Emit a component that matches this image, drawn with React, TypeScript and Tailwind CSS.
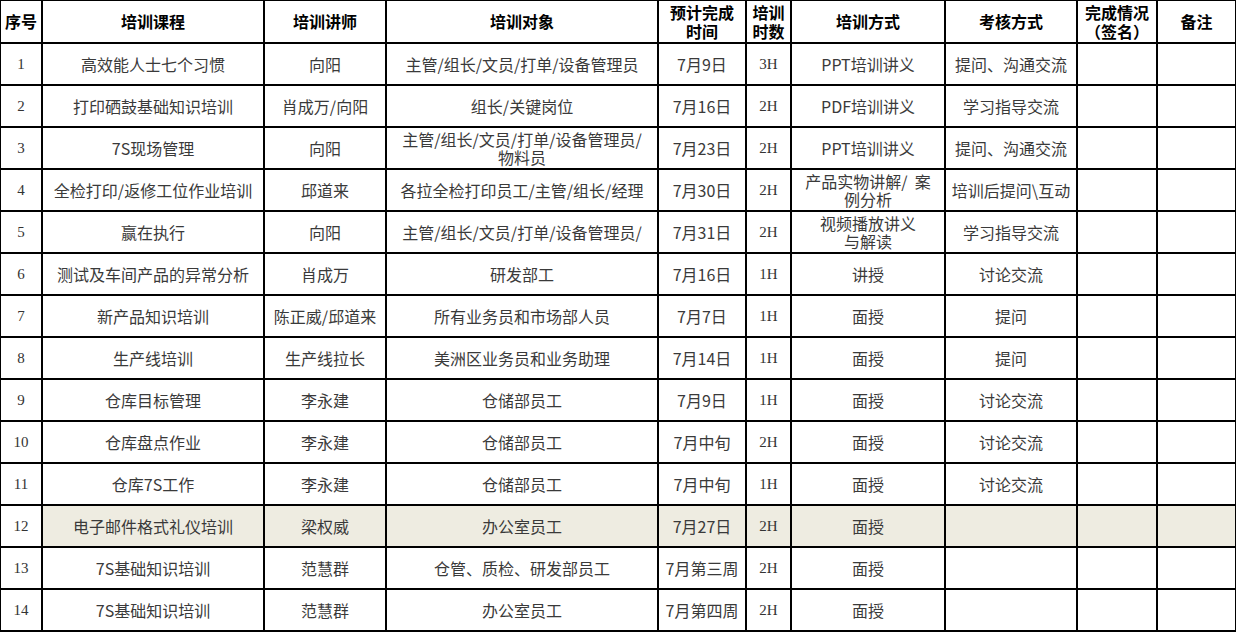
import React from 'react';

type Row = {
  no: string;
  course: string;
  teacher: string;
  target: React.ReactNode;
  date: string;
  hours: string;
  method: React.ReactNode;
  exam: string;
  shaded?: boolean;
};

const rows: Row[] = [
  { no: '1', course: '高效能人士七个习惯', teacher: '向阳', target: '主管/组长/文员/打单/设备管理员', date: '7月9日', hours: '3H', method: 'PPT培训讲义', exam: '提问、沟通交流' },
  { no: '2', course: '打印硒鼓基础知识培训', teacher: '肖成万/向阳', target: '组长/关键岗位', date: '7月16日', hours: '2H', method: 'PDF培训讲义', exam: '学习指导交流' },
  { no: '3', course: '7S现场管理', teacher: '向阳', target: <>主管/组长/文员/打单/设备管理员/<br />物料员</>, date: '7月23日', hours: '2H', method: 'PPT培训讲义', exam: '提问、沟通交流' },
  { no: '4', course: '全检打印/返修工位作业培训', teacher: '邱道来', target: '各拉全检打印员工/主管/组长/经理', date: '7月30日', hours: '2H', method: <>产品实物讲解/{'\u00a0\u00a0'}案<br />例分析</>, exam: '培训后提问\\互动' },
  { no: '5', course: '赢在执行', teacher: '向阳', target: '主管/组长/文员/打单/设备管理员/', date: '7月31日', hours: '2H', method: <>视频播放讲义<br />与解读</>, exam: '学习指导交流' },
  { no: '6', course: '测试及车间产品的异常分析', teacher: '肖成万', target: '研发部工', date: '7月16日', hours: '1H', method: '讲授', exam: '讨论交流' },
  { no: '7', course: '新产品知识培训', teacher: '陈正威/邱道来', target: '所有业务员和市场部人员', date: '7月7日', hours: '1H', method: '面授', exam: '提问' },
  { no: '8', course: '生产线培训', teacher: '生产线拉长', target: '美洲区业务员和业务助理', date: '7月14日', hours: '1H', method: '面授', exam: '提问' },
  { no: '9', course: '仓库目标管理', teacher: '李永建', target: '仓储部员工', date: '7月9日', hours: '1H', method: '面授', exam: '讨论交流' },
  { no: '10', course: '仓库盘点作业', teacher: '李永建', target: '仓储部员工', date: '7月中旬', hours: '2H', method: '面授', exam: '讨论交流' },
  { no: '11', course: '仓库7S工作', teacher: '李永建', target: '仓储部员工', date: '7月中旬', hours: '1H', method: '面授', exam: '讨论交流' },
  { no: '12', course: '电子邮件格式礼仪培训', teacher: '梁权威', target: '办公室员工', date: '7月27日', hours: '2H', method: '面授', exam: '', shaded: true },
  { no: '13', course: '7S基础知识培训', teacher: '范慧群', target: '仓管、质检、研发部员工', date: '7月第三周', hours: '2H', method: '面授', exam: '' },
  { no: '14', course: '7S基础知识培训', teacher: '范慧群', target: '办公室员工', date: '7月第四周', hours: '2H', method: '面授', exam: '' },
];

const sans = 'font-["Noto_Sans_CJK_SC",sans-serif]';
const serif = 'font-["Liberation_Serif",serif]';

function Cell({ children, className = '' }: { children?: React.ReactNode; className?: string }) {
  return (
    <div className={`flex items-center justify-center text-center border-r-2 border-b-2 border-black leading-[18px] ${className}`}>
      {children}
    </div>
  );
}

export default function App() {
  const headers: React.ReactNode[] = [
    '序号', '培训课程', '培训讲师', '培训对象',
    <>预计完成<br />时间</>, <>培训<br />时数</>,
    '培训方式', '考核方式', <>完成情况<br />（签名）</>, '备注',
  ];

  return (
    <div className="w-[1236px] h-[632px] bg-white overflow-hidden">
      <div className={`grid grid-cols-[42px_222px_122px_272px_88px_45px_154px_132px_80px_79px] grid-rows-[43px_repeat(14,42px)] border-l border-t border-black ${sans}`}>
        {headers.map((h, i) => (
          <Cell key={i} className="font-bold text-[16px] text-black leading-[19px]">{h}</Cell>
        ))}

        {rows.map(r => {
          const bg = r.shaded ? 'bg-[#eeece1]' : 'bg-white';
          return (
            <React.Fragment key={r.no}>
              <Cell className={`bg-white text-[15px] text-[#333] ${serif}`}>{r.no}</Cell>
              <Cell className={`${bg} text-[16px] text-[#3a3a3a]`}>{r.course}</Cell>
              <Cell className={`${bg} text-[16px] text-[#3a3a3a]`}>{r.teacher}</Cell>
              <Cell className={`${bg} text-[16px] text-[#3a3a3a]`}>{r.target}</Cell>
              <Cell className={`${bg} text-[16px] text-[#3a3a3a]`}>{r.date}</Cell>
              <Cell className={`${bg} text-[15px] text-[#333] ${serif}`}>{r.hours}</Cell>
              <Cell className={`${bg} text-[16px] text-[#3a3a3a]`}>{r.method}</Cell>
              <Cell className={`${bg} text-[16px] text-[#3a3a3a]`}>{r.exam}</Cell>
              <Cell className={bg} />
              <Cell className={bg} />
            </React.Fragment>
          );
        })}
      </div>
    </div>
  );
}
